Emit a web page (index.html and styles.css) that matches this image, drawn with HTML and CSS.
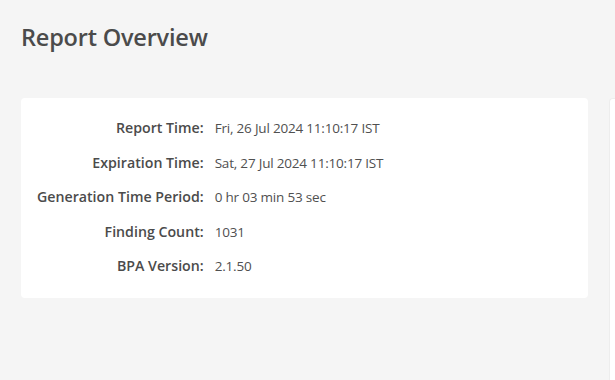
FILE: index.html
```html
<!DOCTYPE html>
<html lang="en">
<head>
    <meta charset="UTF-8">
    <title>Report Overview</title>
    <link rel="stylesheet" href="styles.css">
</head>
<body>

<div id="page">
    <h1 class="page-title">Report Overview</h1>

    <div class="cards">
        <div class="card overview">
            <div class="label">Report Time:</div>
            <div class="value">Fri, 26 Jul 2024 11:10:17 IST</div>

            <div class="label">Expiration Time:</div>
            <div class="value">Sat, 27 Jul 2024 11:10:17 IST</div>

            <div class="label">Generation Time Period:</div>
            <div class="value">0 hr 03 min 53 sec</div>

            <div class="label">Finding Count:</div>
            <div class="value">1031</div>

            <div class="label">BPA Version:</div>
            <div class="value">2.1.50</div>
        </div>

        <!-- next card, cut off by the window -->
        <div class="card side"></div>
    </div>
</div>

</body>
</html>
```

FILE: styles.css
```css
html, body {
    margin: 0;
    height: 100%;
    overflow: hidden;
}

body {
    font-family: "Open Sans", "Noto Sans", sans-serif;
    background-color: #f5f5f5;
    color: #4b4b4b;
}

#page {
    padding: 20px 0 0 21px;
}

.page-title {
    margin: 0;
    font-size: 23.5px;
    font-weight: 600;
    line-height: 34px;
    color: #4b4b4b;
    letter-spacing: -0.2px;
}

.cards {
    display: flex;
    gap: 21px;
    margin-top: 44px;
    align-items: flex-start;
}

.card {
    background-color: #fff;
    border-radius: 4px;
}

.overview {
    width: 567px;
    box-sizing: border-box;
    padding: 20px 0 22px 16px;
    display: grid;
    grid-template-columns: max-content 1fr;
    column-gap: 11px;
    row-gap: 14.5px;
    font-size: 13.5px;
    line-height: 20px;
}

.label {
    text-align: right;
    font-size: 14.2px;
    font-weight: 600;
    color: #4b4b4b;
}

.value {
    color: #505050;
    letter-spacing: -0.2px;
}

.side {
    flex: 1;
    height: 282px;
    border: 1px solid #ededed;
    border-right: none;
    border-bottom: none;
    border-radius: 4px 0 0 0;
}
```
